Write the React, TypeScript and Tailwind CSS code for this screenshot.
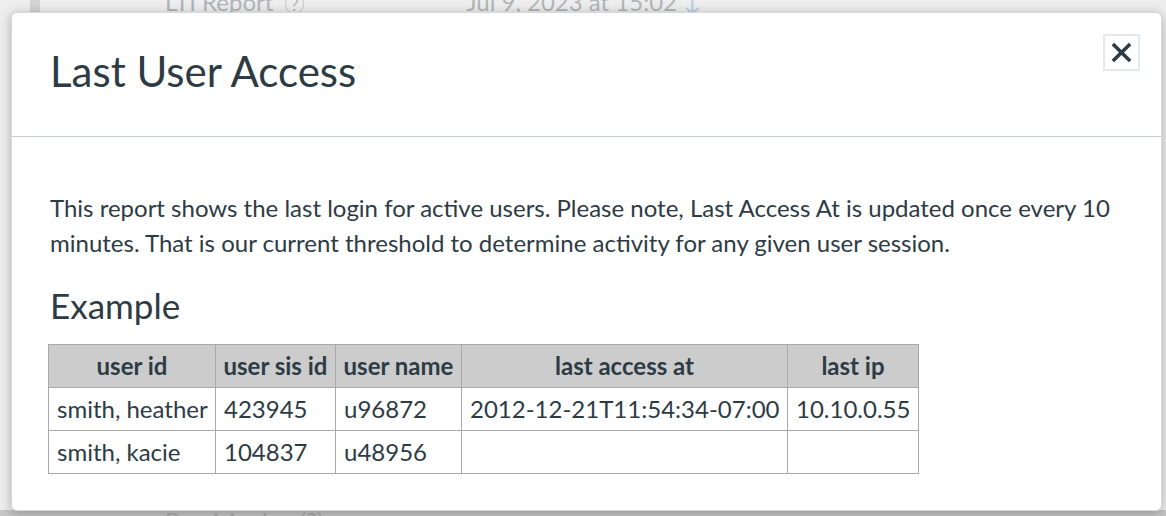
import React from 'react';

const rows = [
  ['smith, heather', '423945', 'u96872', '2012-12-21T11:54:34-07:00', '10.10.0.55'],
  ['smith, kacie', '104837', 'u48956', '', ''],
];

const headers = ['user id', 'user sis id', 'user name', 'last access at', 'last ip'];
const widths = ['w-[167px]', 'w-[120px]', 'w-[126px]', 'w-[326px]', 'w-[131px]'];

function CloseIcon() {
  return (
    <svg width="21" height="21" viewBox="0 0 20 20" fill="none">
      <path d="M3 3L17 17M17 3L3 17" stroke="#2d3b45" strokeWidth="3.4" strokeLinecap="square" />
    </svg>
  );
}

export default function App() {
  return (
    <div className="relative w-[1166px] h-[516px] overflow-hidden bg-[#eeeeee] font-['Lato','Liberation_Sans',sans-serif] text-[#2d3b45]">
      {/* page behind the dialog */}
      <div className="flex flex-col h-full">
        <div className="flex items-start h-[12px]">
          <div className="ml-[30px] w-[10px] h-full bg-[#d4d4d4]" />
          <div className="ml-[125px] -mt-[12px] text-[24px] leading-[28px] text-[#b3b6b9] flex gap-3 items-baseline">
            LTI Report <span className="text-[18px] border border-[#c3c5c8] rounded-full px-1 leading-none">?</span>
          </div>
          <div className="ml-[163px] -mt-[12px] text-[24px] leading-[28px] text-[#b3b6b9]">
            Jul 9, 2023 at 15:02 <span className="text-[#b7cde6]">↓</span>
          </div>
        </div>
        <div className="flex-1" />
        <div className="h-[6px] bg-[#c6c6c6] flex items-start">
          <div className="ml-[165px] text-[24px] text-[#a9abad] leading-[22px]">Provisioning (?)</div>
        </div>
      </div>

      {/* dialog */}
      <div className="absolute left-[11px] top-[12px] w-[1151px] h-[499px] bg-white rounded-[6px] border border-[#d8d8d8] shadow-[0_2px_12px_rgba(0,0,0,0.28)] flex flex-col">
        <div className="relative h-[124px] border-b border-[#c7cdd1] flex items-center px-[38px]">
          <h1 className="text-[42px] font-normal leading-none -mt-[8px]">Last User Access</h1>
          <button className="absolute right-[21px] top-[21px] w-[37px] h-[37px] border-2 border-[#e4e9ee] flex items-center justify-center">
            <CloseIcon />
          </button>
        </div>
        <div className="px-[38px] pt-[53px]">
          <p className="text-[24px] leading-[35px]">
            This report shows the last login for active users. Please note, Last Access At is updated once every 10
            minutes. That is our current threshold to determine activity for any given user session.
          </p>
          <h2 className="text-[35px] font-normal leading-none mt-[28px] mb-[21px]">Example</h2>
          <table className="-ml-[2px] border-collapse text-[24px] table-fixed w-[870px]">
            <thead>
              <tr className="bg-[#cccccc]">
                {headers.map((h, i) => (
                  <th key={h} className={`${widths[i]} h-[43px] border border-[#a9a9a9] font-bold text-center px-1 whitespace-nowrap`}>
                    {h}
                  </th>
                ))}
              </tr>
            </thead>
            <tbody>
              {rows.map((r, ri) => (
                <tr key={ri}>
                  {r.map((c, ci) => (
                    <td key={ci} className="h-[43px] border border-[#a9a9a9] px-2 whitespace-nowrap">
                      {c}
                    </td>
                  ))}
                </tr>
              ))}
            </tbody>
          </table>
        </div>
      </div>
    </div>
  );
}
